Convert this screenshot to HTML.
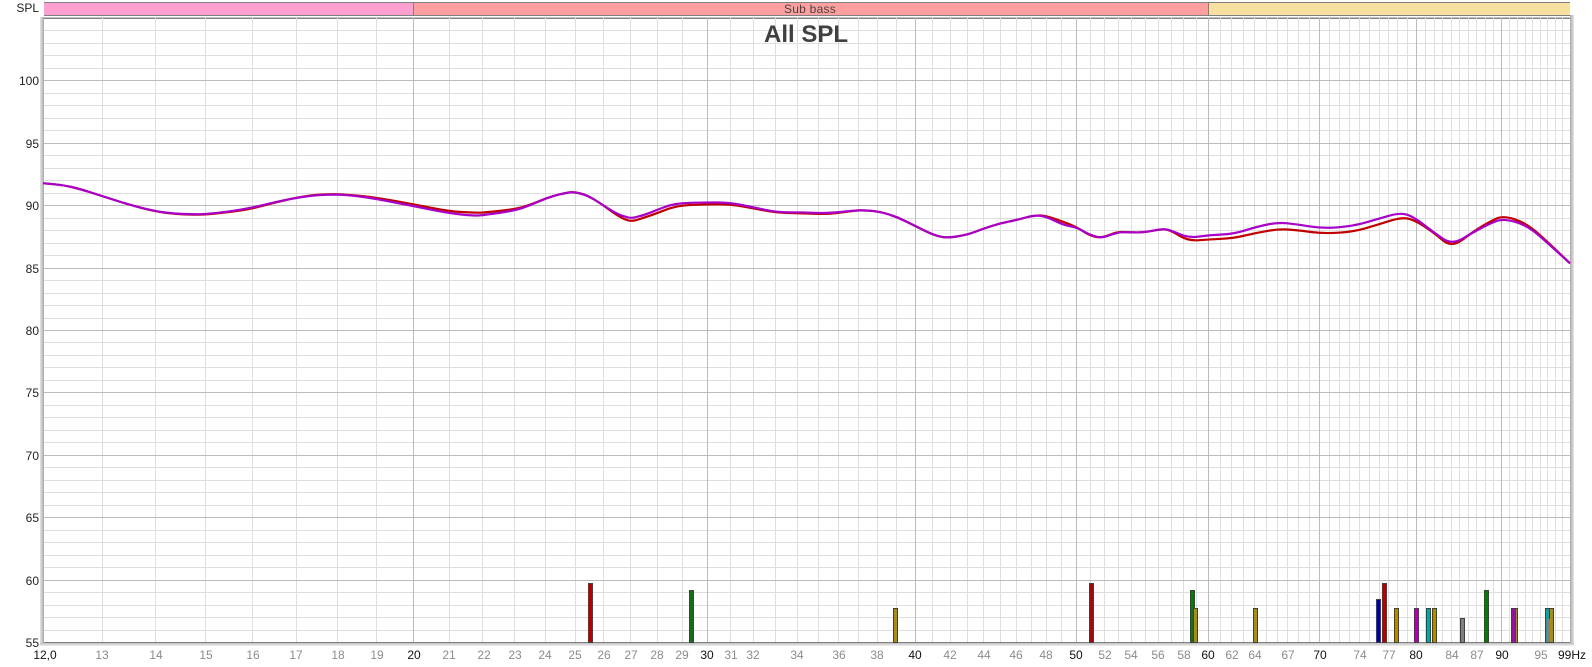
<!DOCTYPE html>
<html lang="en">
<head>
<meta charset="utf-8">
<title>All SPL</title>
<style>
html,body{margin:0;padding:0;background:#fff;width:1592px;height:667px;overflow:hidden}
svg{display:block}
text{font-family:"Liberation Sans",Arial,sans-serif}
.y{font-size:12px;text-anchor:end;fill:#222}
.g{font-size:12px;text-anchor:middle;fill:#8c8c8c}
.k{font-size:12px;text-anchor:middle;fill:#111}
.c{fill:none;stroke-width:2.2;stroke-linejoin:round;stroke-linecap:round}
</style>
</head>
<body>
<svg width="1592" height="667" viewBox="0 0 1592 667" xmlns="http://www.w3.org/2000/svg">
<defs>
<linearGradient id="sl" x1="0" x2="1" y1="0" y2="0"><stop offset="0" stop-color="#e6e6e6"/><stop offset="1" stop-color="#a8a8a8"/></linearGradient>
<linearGradient id="sr" x1="0" x2="1" y1="0" y2="0"><stop offset="0" stop-color="#a8a8a8"/><stop offset="1" stop-color="#e6e6e6"/></linearGradient>
<linearGradient id="sb" x1="0" x2="0" y1="0" y2="1"><stop offset="0" stop-color="#bdbdbd"/><stop offset="1" stop-color="#f0f0f0"/></linearGradient>
</defs>

<!-- band bar -->
<g shape-rendering="crispEdges">
<rect x="44" y="2" width="369" height="14" fill="#ffa0d0"/>
<rect x="413" y="2" width="795" height="14" fill="#ff9f9f"/>
<rect x="1208" y="2" width="362" height="14" fill="#f9e0a0"/>
<rect x="44" y="2" width="1526" height="1" fill="#808080"/>
<rect x="44" y="15" width="1526" height="1" fill="#808080"/>
<rect x="413" y="2" width="1" height="14" fill="#808080"/>
<rect x="1208" y="2" width="1" height="14" fill="#808080"/>

<!-- frame shadows -->
<rect x="40" y="17" width="4" height="628" fill="url(#sl)"/>
<rect x="1570" y="15" width="4" height="630" fill="url(#sr)"/>
<rect x="40" y="643" width="1534" height="3" fill="url(#sb)"/>
<rect x="44" y="17" width="1526" height="1" fill="#c4c4c4"/>
<rect x="44" y="18" width="1526" height="1" fill="#808080"/>

<!-- minor horizontal -->
<path fill="none" stroke="#dedede" stroke-width="1" d="M44 30.5H1570M44 43.5H1570M44 55.5H1570M44 68.5H1570M44 93.5H1570M44 105.5H1570M44 118.5H1570M44 130.5H1570M44 155.5H1570M44 168.5H1570M44 180.5H1570M44 193.5H1570M44 218.5H1570M44 230.5H1570M44 243.5H1570M44 255.5H1570M44 280.5H1570M44 293.5H1570M44 305.5H1570M44 318.5H1570M44 342.5H1570M44 355.5H1570M44 367.5H1570M44 380.5H1570M44 405.5H1570M44 417.5H1570M44 430.5H1570M44 442.5H1570M44 467.5H1570M44 480.5H1570M44 492.5H1570M44 505.5H1570M44 530.5H1570M44 542.5H1570M44 555.5H1570M44 567.5H1570M44 592.5H1570M44 605.5H1570M44 617.5H1570M44 630.5H1570"/>
<!-- minor vertical -->
<path fill="none" stroke="#dedede" stroke-width="1" d="M102.5 18V642M155.5 18V642M205.5 18V642M252.5 18V642M296.5 18V642M337.5 18V642M376.5 18V642M449.5 18V642M482.5 18V642M514.5 18V642M545.5 18V642M575.5 18V642M603.5 18V642M630.5 18V642M657.5 18V642M682.5 18V642M730.5 18V642M753.5 18V642M775.5 18V642M797.5 18V642M818.5 18V642M838.5 18V642M858.5 18V642M877.5 18V642M896.5 18V642M932.5 18V642M950.5 18V642M967.5 18V642M983.5 18V642M1000.5 18V642M1016.5 18V642M1031.5 18V642M1046.5 18V642M1061.5 18V642M1090.5 18V642M1104.5 18V642M1118.5 18V642M1131.5 18V642M1145.5 18V642M1158.5 18V642M1171.5 18V642M1183.5 18V642M1196.5 18V642M1220.5 18V642M1231.5 18V642M1243.5 18V642M1254.5 18V642M1266.5 18V642M1277.5 18V642M1287.5 18V642M1298.5 18V642M1309.5 18V642M1329.5 18V642M1339.5 18V642M1349.5 18V642M1359.5 18V642M1369.5 18V642M1379.5 18V642M1388.5 18V642M1397.5 18V642M1407.5 18V642M1425.5 18V642M1434.5 18V642M1442.5 18V642M1451.5 18V642M1459.5 18V642M1468.5 18V642M1476.5 18V642M1485.5 18V642M1493.5 18V642M1509.5 18V642M1517.5 18V642M1525.5 18V642M1532.5 18V642M1540.5 18V642M1547.5 18V642M1555.5 18V642M1562.5 18V642"/>
<!-- major -->
<path fill="none" stroke="#bbbbbb" stroke-width="1" d="M44 80.5H1570M44 143.5H1570M44 205.5H1570M44 268.5H1570M44 330.5H1570M44 392.5H1570M44 455.5H1570M44 517.5H1570M44 580.5H1570M413.5 18V642M707.5 18V642M915.5 18V642M1076.5 18V642M1208.5 18V642M1319.5 18V642M1416.5 18V642M1501.5 18V642"/>
<rect x="44" y="642" width="1526" height="1" fill="#808080"/>

<!-- bars -->
<g stroke="#404040" stroke-width="1">
<rect x="588.5" y="583.5" width="4" height="59" fill="#b80000"/>
<rect x="689.5" y="590.5" width="4" height="52" fill="#087808"/>
<rect x="893.5" y="608.5" width="4" height="34" fill="#b08c00"/>
<rect x="1089.5" y="583.5" width="4" height="59" fill="#b80000"/>
<rect x="1190.5" y="590.5" width="4" height="52" fill="#087808"/>
<rect x="1193.5" y="608.5" width="4" height="34" fill="#b08c00"/>
<rect x="1253.5" y="608.5" width="4" height="34" fill="#b08c00"/>
<rect x="1376.5" y="599.5" width="4" height="43" fill="#0000a8"/>
<rect x="1382.5" y="583.5" width="4" height="59" fill="#b80000"/>
<rect x="1394.5" y="608.5" width="4" height="34" fill="#b08c00"/>
<rect x="1414.5" y="608.5" width="4" height="34" fill="#b000b0"/>
<rect x="1426.5" y="608.5" width="4" height="34" fill="#00a8a8"/>
<rect x="1432.5" y="608.5" width="4" height="34" fill="#b08c00"/>
<rect x="1460.5" y="618.5" width="4" height="24" fill="#808080"/>
<rect x="1484.5" y="590.5" width="4" height="52" fill="#087808"/>
<rect x="1513.5" y="608.5" width="4" height="34" fill="#b08c00"/>
<rect x="1511.5" y="608.5" width="4" height="34" fill="#b000b0"/>
<rect x="1549.5" y="608.5" width="4" height="34" fill="#b08c00"/>
<rect x="1545.5" y="608.5" width="4" height="34" fill="#00a8a8"/>
</g>
<rect x="1547" y="619" width="3" height="23" fill="#808080"/>
</g>

<!-- curves -->
<path class="c" stroke="#c00000" d="M44 183.3L53.5 184.2Q63 185 71.5 187Q80 189 91 192.5Q102 196 116 200.5Q130 205 142.9 208.3Q155.7 211.5 165.4 212.8Q175 214 184 214.4Q193 214.7 199.4 214.7Q205.7 214.6 217.9 213.3Q230 212 241 210.4Q252 208.7 263.5 205.6Q275 202.5 285.9 200Q296.7 197.5 305.9 196.2Q315 194.8 326.4 194.4Q337.7 194 347.4 194.8Q357 195.5 366.9 196.6Q376.7 197.7 395 201Q413.3 204.3 431.3 207.8Q449.3 211.3 461.3 212Q473.3 212.7 478 212.7Q482.7 212.7 498.5 211Q514.3 209.3 522.2 207.2Q530 205 537.9 201.7Q545.7 198.3 552.9 196.2Q560 194 566.5 192.8Q573 191.5 580 193.3Q587 195 595 200Q603 205 610 210.3Q617 215.5 623.7 218.8Q630.3 222 636.7 220Q643 218 649.9 215.7Q656.7 213.3 663.4 210.7Q670 208 676.2 206.7Q682.3 205.3 695 204.8Q707.7 204.3 719 204.3Q730.3 204.3 741.8 206.3Q753.3 208.3 765 210.6Q776.7 212.8 789.9 213Q803 213.3 814.9 213.8Q826.7 214.3 835.9 213.2Q845 212 852.5 211Q860 210 869.2 210.7Q878.3 211.3 887.5 214Q896.7 216.7 906 221.4Q915.3 226 924.3 230.5Q933.3 235 940 236.5Q946.7 238.3 956.7 236.5Q966.7 235 975 231.9Q983.3 228.7 991.7 226Q1000 223.3 1008.4 221.7Q1016.7 220 1025.9 217.5Q1035 215 1040.9 215.5Q1046.7 216 1055 218.9Q1063.3 221.7 1070 224.4Q1076.7 227 1083.4 231.4Q1090 235.7 1095.9 236.9Q1101.7 238 1109.2 235Q1116.7 232 1120.9 232Q1125 232 1134 232.4Q1143 232.7 1153 230.7Q1163 228.6 1167.4 229.8Q1171.7 231 1180 236Q1188.3 241 1199.2 240.2Q1210 239.3 1221.7 238.8Q1233.3 238.3 1245 235.5Q1256.7 232.7 1267.5 230.9Q1278.3 229 1287.5 229.5Q1296.7 230 1310 231.9Q1323.3 233.7 1338.3 232.7Q1353.3 231.7 1365 228.4Q1376.7 225 1388.4 221.3Q1400 217.5 1406.7 218.4Q1413.3 219.3 1423.2 225.7Q1433 232 1442.4 240Q1451.7 248 1462.5 239.8Q1473.3 231.5 1481.7 226.5Q1490 221.5 1496.7 218.5Q1503.3 215.5 1515 219.4Q1526.7 223.3 1538.4 233.7Q1550 244 1569.3 262.7"/>
<path class="c" stroke="#a800c8" d="M44 183.3L53.5 184.2Q63 185 71.5 187Q80 189 91 192.5Q102 196 116 200.5Q130 205 142.9 208.2Q155.7 211.3 165.4 212.5Q175 213.7 184 214Q193 214.3 199.4 214.2Q205.7 214 217.9 212.8Q230 211.5 241 209.6Q252 207.7 263.5 204.9Q275 202 285.9 199.9Q296.7 197.7 305.9 196.5Q315 195.3 326.4 194.8Q337.7 194.3 347.4 195.2Q357 196 366.9 197.5Q376.7 199 395 202.5Q413.3 206 431.3 209.7Q449.3 213.3 461.3 214.5Q473.3 215.7 478 215.5Q482.7 215.3 498.5 213Q514.3 210.7 522.2 208.1Q530 205.5 537.9 201.9Q545.7 198.3 552.9 196.2Q560 194 566.5 193Q573 191.5 580 193.5Q587 195 595 200Q603 205 610 209.5Q617 214 623.7 216.2Q630.3 219 636.7 216.9Q643 215.5 649.9 212.8Q656.7 210 663.4 207.5Q670 205 676.2 204Q682.3 203 695 202.7Q707.7 202.3 719 202.5Q730.3 202.7 741.8 205Q753.3 207.3 765 209.8Q776.7 212.3 789.9 212.3Q803 212.3 814.9 212.8Q826.7 213.3 835.9 212.4Q845 211.5 852.5 210.8Q860 210 869.2 210.7Q878.3 211.3 887.5 214Q896.7 216.7 906 221.4Q915.3 226 924.3 230.5Q933.3 235 940 236.5Q946.7 238.3 956.7 236.5Q966.7 235 975 231.9Q983.3 228.7 991.7 226Q1000 223.3 1008.4 221.7Q1016.7 220 1025.9 217.5Q1035 215 1040.9 215.9Q1046.7 216.7 1055 220.9Q1063.3 225 1070 226.2Q1076.7 227.3 1083.4 231.2Q1090 235 1095.9 236.5Q1101.7 238.5 1109.2 235.4Q1116.7 232.7 1120.9 232.3Q1125 232 1134 232.4Q1143 232.7 1153 230.7Q1163 228.6 1167.4 229.7Q1171.7 230.7 1180 234.3Q1188.3 238 1199.2 236.5Q1210 235 1221.7 234.5Q1233.3 234 1245 230.4Q1256.7 226.7 1267.5 224.5Q1278.3 222.3 1287.5 223.3Q1296.7 224.3 1310 226.4Q1323.3 228.5 1338.3 227.3Q1353.3 226 1365 222.7Q1376.7 219.3 1388.4 215.9Q1400 212.5 1406.7 214.6Q1413.3 216.7 1423.2 224.2Q1433 231.7 1442.4 238.4Q1451.7 245 1462.5 238.7Q1473.3 232.3 1481.7 227.9Q1490 223.5 1496.7 221Q1503.3 218.5 1515 221.8Q1526.7 225 1538.4 235Q1550 245 1569.3 262.7"/>

<!-- text -->
<text x="810" y="13" font-size="12" text-anchor="middle" fill="#444" letter-spacing=".25">Sub bass</text>
<text x="764" y="42" font-size="24" font-weight="bold" fill="#404040">All SPL</text>
<text class="y" x="39" y="12">SPL</text>
<text class="y" x="39" y="85">100</text>
<text class="y" x="39" y="148">95</text>
<text class="y" x="39" y="210">90</text>
<text class="y" x="39" y="273">85</text>
<text class="y" x="39" y="335">80</text>
<text class="y" x="39" y="397">75</text>
<text class="y" x="39" y="460">70</text>
<text class="y" x="39" y="522">65</text>
<text class="y" x="39" y="585">60</text>
<text class="y" x="39" y="647">55</text>

<text class="k" x="45" y="659">12,0</text>
<text class="g" x="102" y="659">13</text>
<text class="g" x="156" y="659">14</text>
<text class="g" x="206" y="659">15</text>
<text class="g" x="253" y="659">16</text>
<text class="g" x="296" y="659">17</text>
<text class="g" x="338" y="659">18</text>
<text class="g" x="377" y="659">19</text>
<text class="k" x="414" y="659">20</text>
<text class="g" x="449" y="659">21</text>
<text class="g" x="484" y="659">22</text>
<text class="g" x="515" y="659">23</text>
<text class="g" x="545" y="659">24</text>
<text class="g" x="575" y="659">25</text>
<text class="g" x="604" y="659">26</text>
<text class="g" x="631" y="659">27</text>
<text class="g" x="657" y="659">28</text>
<text class="g" x="682" y="659">29</text>
<text class="k" x="707" y="659">30</text>
<text class="g" x="731" y="659">31</text>
<text class="g" x="753" y="659">32</text>
<text class="g" x="797" y="659">34</text>
<text class="g" x="839" y="659">36</text>
<text class="g" x="877" y="659">38</text>
<text class="k" x="915" y="659">40</text>
<text class="g" x="950" y="659">42</text>
<text class="g" x="984" y="659">44</text>
<text class="g" x="1016" y="659">46</text>
<text class="g" x="1046" y="659">48</text>
<text class="k" x="1076" y="659">50</text>
<text class="g" x="1105" y="659">52</text>
<text class="g" x="1131" y="659">54</text>
<text class="g" x="1158" y="659">56</text>
<text class="g" x="1184" y="659">58</text>
<text class="k" x="1208" y="659">60</text>
<text class="g" x="1232" y="659">62</text>
<text class="g" x="1255" y="659">64</text>
<text class="g" x="1288" y="659">67</text>
<text class="k" x="1320" y="659">70</text>
<text class="g" x="1360" y="659">74</text>
<text class="g" x="1389" y="659">77</text>
<text class="k" x="1416" y="659">80</text>
<text class="g" x="1452" y="659">84</text>
<text class="g" x="1477" y="659">87</text>
<text class="k" x="1502" y="659">90</text>
<text class="g" x="1541" y="659">95</text>
<text x="1558" y="659" font-size="12" fill="#111">99Hz</text>
</svg>
</body>
</html>
